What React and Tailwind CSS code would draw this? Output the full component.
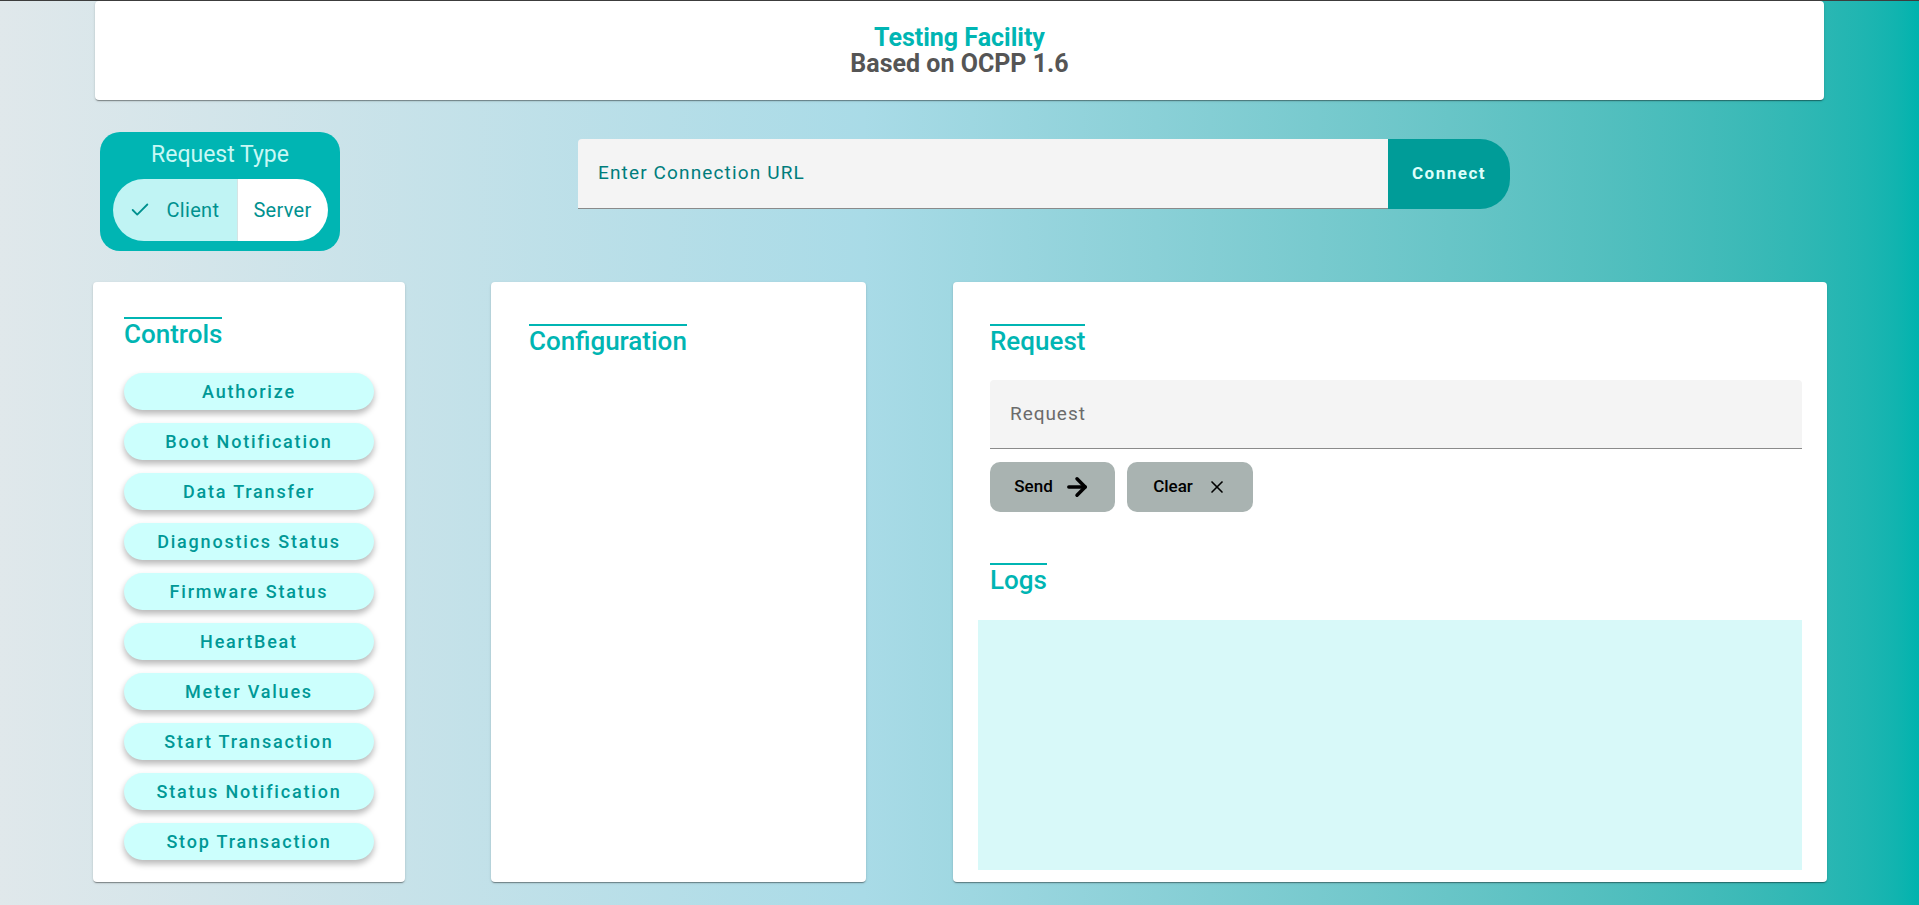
import { Check, X, ArrowRight } from 'lucide-react'

const controls = [
  'Authorize',
  'Boot Notification',
  'Data Transfer',
  'Diagnostics Status',
  'Firmware Status',
  'HeartBeat',
  'Meter Values',
  'Start Transaction',
  'Status Notification',
  'Stop Transaction',
]

const paper = 'bg-white rounded-[4px] shadow-[0_2px_1px_-1px_rgba(0,0,0,0.25),0_1px_1px_0_rgba(0,0,0,0.16),0_1px_3px_0_rgba(0,0,0,0.12)]'

function Heading({ children }) {
  return (
    <div>
      <h5 className="inline-block border-t-2 border-[#00b5b3] text-[26px] font-medium leading-[30px] text-[#00b5b3]">{children}</h5>
    </div>
  )
}

export default function App() {
  return (
    <div className="min-h-screen w-full border-t border-[#3d3d3d] bg-linear-to-r from-[#e0e8eb] via-[#a9dbe7] via-45% to-[#00b3ae] font-[Roboto,sans-serif]">
      {/* header */}
      <div className={`mx-[95px] flex h-[99px] flex-col items-center justify-center ${paper}`}>
        <h1 className="text-[25px] font-bold leading-[26px] text-[#00b5b3]">Testing Facility</h1>
        <h2 className="text-[25px] font-bold leading-[26px] text-[#555]">Based on OCPP 1.6</h2>
      </div>

      {/* request type + connection */}
      <div className="flex items-start gap-[238px] pl-[100px] pt-[32px]">
        <div className="flex w-[240px] flex-col items-center rounded-[20px] bg-[#00b5b3] px-[12px] pb-[10px] pt-[9px]">
          <div className="text-[23px] leading-[28px] text-[#c8f8f5]">Request Type</div>
          <div className="mt-[10px] flex h-[62px] w-[215px] overflow-hidden rounded-full">
            <button className="flex w-[124px] items-center gap-[16px] bg-[#c0f4f4] pl-[16px] text-[20px] tracking-[0.3px] text-[#00918f]">
              <Check size={22} strokeWidth={2} />
              Client
            </button>
            <button className="flex flex-1 items-center justify-center border-l border-[#d6e4e4] bg-white text-[20px] tracking-[0.3px] text-[#00918f]">
              Server
            </button>
          </div>
        </div>

        <div className="mt-[7px] flex h-[70px]">
          <div className="flex w-[810px] items-center rounded-tl-[4px] border-b border-[#8a8a8a] bg-[#f4f4f4] pl-[20px] text-[19px] tracking-[0.06em] text-[#007d7c]">
            Enter Connection URL
          </div>
          <button className="w-[122px] rounded-r-[30px] bg-[#009c98] text-[17px] font-bold tracking-[1.5px] text-[#dcfffb]">
            Connect
          </button>
        </div>
      </div>

      {/* panels */}
      <div className="flex items-start pl-[93px] pt-[31px]">
        <div className={`h-[600px] w-[312px] pl-[31px] pt-[35px] ${paper}`}>
          <Heading>Controls</Heading>
          <div className="mt-[23px] flex w-[250px] flex-col gap-[13px]">
            {controls.map((c) => (
              <button
                key={c}
                className="h-[37px] rounded-full bg-[#ccfffd] text-[18px] font-medium tracking-[1.8px] text-[#009896] shadow-[0_4px_6px_rgba(0,0,0,0.28)]"
              >
                {c}
              </button>
            ))}
          </div>
        </div>

        <div className={`ml-[86px] h-[600px] w-[375px] pl-[38px] pt-[42px] ${paper}`}>
          <Heading>Configuration</Heading>
        </div>

        <div className={`ml-[87px] flex h-[600px] w-[874px] flex-col px-[25px] pt-[42px] ${paper}`}>
          <div className="pl-[12px]">
            <Heading>Request</Heading>
          </div>
          <div className="ml-[12px] mt-[23px] flex h-[69px] items-center rounded-t-[4px] border-b border-[#8a8a8a] bg-[#f4f4f4] pl-[20px] text-[19px] tracking-[0.05em] text-[#6b6b6b]">
            Request
          </div>
          <div className="ml-[12px] mt-[13px] flex gap-[12px]">
            <button className="flex h-[50px] w-[125px] items-center justify-center gap-[10px] rounded-[10px] bg-[#a9b3b1] text-[17px] font-medium text-black">
              Send
              <ArrowRight size={28} strokeWidth={3} />
            </button>
            <button className="flex h-[50px] w-[126px] items-center justify-center gap-[14px] rounded-[10px] bg-[#a9b3b1] text-[17px] font-medium text-black">
              Clear
              <X size={20} strokeWidth={2} />
            </button>
          </div>
          <div className="mt-[51px] pl-[12px]">
            <Heading>Logs</Heading>
          </div>
          <div className="mt-[24px] h-[250px] bg-[#d8f9f9]" />
        </div>
      </div>
    </div>
  )
}
